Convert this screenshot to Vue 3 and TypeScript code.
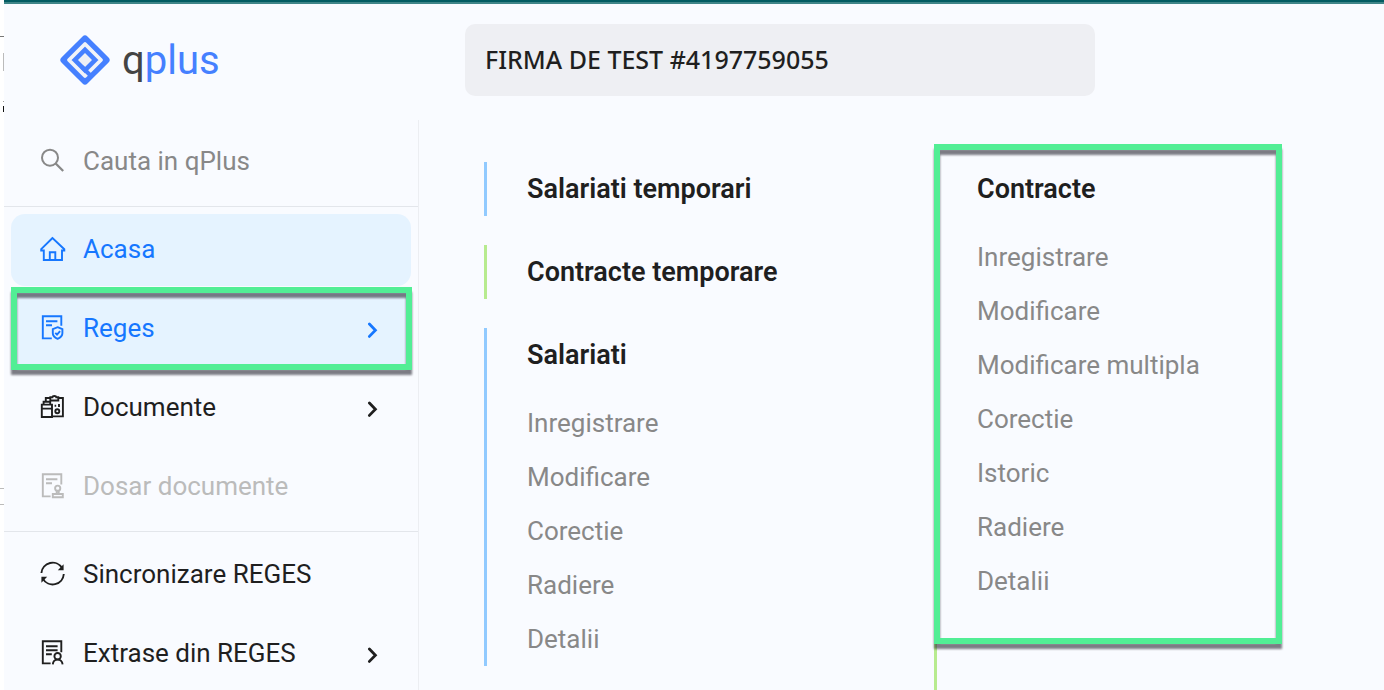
<script setup lang="ts">
import { ref } from 'vue'

type IconName = 'home' | 'reges' | 'documents' | 'folder' | 'sync' | 'extract'

interface NavItem {
  label: string
  icon: IconName
  arrow?: boolean
  active?: boolean
  disabled?: boolean
  callout?: boolean
}

interface MenuGroup {
  title: string
  tone: 'blue' | 'green'
  items: string[]
}

const query = ref('')
const company = 'FIRMA DE TEST #4197759055'

const sections: NavItem[][] = [
  [
    { label: 'Acasa', icon: 'home', active: true },
    { label: 'Reges', icon: 'reges', arrow: true, active: true, callout: true },
    { label: 'Documente', icon: 'documents', arrow: true },
    { label: 'Dosar documente', icon: 'folder', disabled: true },
  ],
  [
    { label: 'Sincronizare REGES', icon: 'sync' },
    { label: 'Extrase din REGES', icon: 'extract', arrow: true },
  ],
]

const groups: MenuGroup[] = [
  { title: 'Salariati temporari', tone: 'blue', items: [] },
  { title: 'Contracte temporare', tone: 'green', items: [] },
  { title: 'Salariati', tone: 'blue', items: ['Inregistrare', 'Modificare', 'Corectie', 'Radiere', 'Detalii'] },
]

const contracts = ['Inregistrare', 'Modificare', 'Modificare multipla', 'Corectie', 'Istoric', 'Radiere', 'Detalii']
</script>

<template>
  <div class="page">
    <svg class="fringe" width="4" height="690" viewBox="0 0 4 690" aria-hidden="true">
      <path d="M0 36.5H4" stroke="#777" />
      <path d="M3.5 53V71" stroke="#bbb" />
      <path d="M3 101.5H4" stroke="#999" />
      <path d="M3.5 106V112" stroke="#111" />
      <path d="M0 488.5H4M0 504.5H4" stroke="#bbb" />
    </svg>
    <div class="shell">
      <header class="top">
        <a class="brand" href="#">
          <svg width="50" height="50" viewBox="0 0 50 50" aria-hidden="true">
            <rect x="6.6" y="6.6" width="36.8" height="36.8" rx="3.5" transform="rotate(45 25 25)" fill="#4580ff" />
            <path d="M25 9L41 25L25 41L9 25Z" fill="none" stroke="#f1f3f8" stroke-width="3.8" stroke-linejoin="round" />
            <path d="M25 18L32 25L25 32L18 25Z" fill="#eef0f5" />
            <path d="M22 32L30.5 40.5" stroke="#4580ff" stroke-width="4" />
          </svg>
          <span class="wordmark"><span class="q">q</span>plus</span>
        </a>
        <button class="company" type="button">{{ company }}</button>
      </header>

      <div class="body">
        <aside class="sidebar">
          <label class="search">
            <svg width="26" height="26" viewBox="0 0 26 26" fill="none" stroke="#888" stroke-width="2" aria-hidden="true">
              <circle cx="10" cy="9.7" r="8" />
              <path d="M15.7 15.5L23.2 23" stroke-width="2.3" />
            </svg>
            <input v-model="query" type="text" placeholder="Cauta in qPlus" aria-label="Cauta in qPlus" />
          </label>

          <nav v-for="(section, index) in sections" :key="index" class="section">
            <button
              v-for="item in section"
              :key="item.label"
              class="nav-item"
              :class="{ active: item.active, callout: item.callout }"
              type="button"
              :disabled="item.disabled"
            >
              <svg class="icon" width="26" height="26" viewBox="0 0 26 26" aria-hidden="true">
                <g v-if="item.icon === 'home'">
                  <path d="M12.5 2L1.2 13.2V14.5H3.8V24H22V14.5H24.3V13.2Z" />
                  <path d="M9.8 24V16.2H15.3V24" />
                </g>
                <g v-else-if="item.icon === 'reges'">
                  <path d="M21.3 10.8V1.3H2.8V23.4H11.8M6 6.2H17.4M6 10.2H12" />
                  <path d="M17.6 12.2L22.4 14.2V18.3C22.4 21 20 22.8 17.6 23.8C15.2 22.8 12.8 21 12.8 18.3V14.2Z" />
                  <path d="M15.3 17.9L17 19.6L20.1 16.1" />
                </g>
                <g v-else-if="item.icon === 'documents'">
                  <path d="M5.8 7V4H10.5M18 4H22.9V22.4H12.3" />
                  <path d="M10.3 3.3H12.4C12.5 1.6 16.2 1.6 16.3 3.3H18.3V6.5H10.3Z" />
                  <path d="M3.6 10.6V7.8H10.2V10.6M1.8 10.6H12V23H1.8ZM1.8 14.6H12" />
                  <path d="M14.6 11.7H16.2M19 10V13" />
                  <circle cx="17.3" cy="17.2" r="2" />
                </g>
                <g v-else-if="item.icon === 'folder'">
                  <path d="M21.3 11.5V1.3H2.8V23.4H10.6M6 6.2H17.4M6 10.2H12" />
                  <circle cx="17.7" cy="15.2" r="2.6" />
                  <path d="M16.7 17.8V21M18.7 17.8V21M12.8 21H22.8V24.2H12.8Z" />
                </g>
                <g v-else-if="item.icon === 'sync'">
                  <path d="M1.4 12A11.2 11.2 0 0 1 22.2 7.2M23.8 13A11.2 11.2 0 0 1 2.9 17.8" />
                  <path class="solid" d="M23.6 3.2V9.2H17.8ZM1.4 21.8V15.8H7.2Z" />
                </g>
                <g v-else>
                  <path d="M21.3 12.3V1.3H2.8V23.4H10.6M6 6.2H17.6M6 10.2H17.6M6 14.2H11.8" />
                  <circle cx="17.6" cy="16.2" r="3.2" />
                  <path d="M12.8 24.4C13 21.5 14.8 19.6 17.6 19.6C20.4 19.6 22.3 21.5 22.6 24.4" />
                </g>
              </svg>
              <span class="label">{{ item.label }}</span>
              <svg v-if="item.arrow" class="arrow" width="12" height="20" viewBox="0 0 12 20" aria-hidden="true">
                <path d="M2.4 6L8.4 12.2L2.4 18.4" />
              </svg>
            </button>
          </nav>
        </aside>

        <main class="menu">
          <div class="column">
            <section v-for="group in groups" :key="group.title" class="group" :class="group.tone">
              <h2>{{ group.title }}</h2>
              <ul v-if="group.items.length">
                <li v-for="entry in group.items" :key="entry"><a href="#">{{ entry }}</a></li>
              </ul>
            </section>
          </div>
          <div class="column">
            <section class="group green tall">
              <div class="marked">
                <h2>Contracte</h2>
                <ul>
                  <li v-for="entry in contracts" :key="entry"><a href="#">{{ entry }}</a></li>
                </ul>
              </div>
            </section>
          </div>
        </main>
      </div>
    </div>
  </div>
</template>

<style>
body {
  background: #fff;
}
</style>

<style scoped>
.page {
  display: flex;
  height: 100vh;
  overflow: hidden;
  font-family: Roboto, "Liberation Sans", sans-serif;
  font-size: 26px;
  line-height: 36px;
  color: #1f1f1f;
}

.fringe {
  flex: none;
}

.shell {
  flex: 1;
  min-width: 0;
  display: flex;
  flex-direction: column;
  background: #f9fbff;
}

.top {
  flex: none;
  display: flex;
  box-sizing: border-box;
  height: 120px;
  border-top: 2px solid #035c62;
  box-shadow: inset 0 2px #3f8588;
  padding-top: 22px;
}

.brand {
  display: flex;
  align-items: center;
  gap: 12px;
  flex: none;
  box-sizing: border-box;
  width: 461px;
  height: 72px;
  padding-left: 56px;
  color: #4580ff;
  text-decoration: none;
}

.wordmark {
  padding-top: 2px;
  font-size: 40px;
  line-height: 48px;
}

.q {
  color: #444;
}

.company {
  flex: 0 1 630px;
  height: 72px;
  padding: 0 20px 2px;
  border: 0;
  border-radius: 10px;
  background: #eeeff3;
  color: #1f1f1f;
  font: 500 25px/36px "Noto Sans", "Open Sans", sans-serif;
  text-align: left;
}

.body {
  flex: 1;
  min-height: 0;
  display: flex;
}

.sidebar {
  flex: none;
  box-sizing: border-box;
  width: 415px;
  border-right: 1px solid #eceef2;
}

.search {
  display: flex;
  align-items: center;
  gap: 17px;
  box-sizing: border-box;
  height: 87px;
  padding: 0 36px 5px;
  border-bottom: 1px solid #e3e6eb;
}

.search input {
  flex: 1;
  min-width: 0;
  padding: 0;
  border: 0;
  outline: 0;
  background: transparent;
  font: inherit;
  color: #1f1f1f;
}

.search input::placeholder {
  color: #888;
  opacity: 1;
}

.section {
  display: flex;
  flex-direction: column;
  gap: 7px;
  padding: 7px 7px 8px;
}

.section + .section {
  border-top: 1px solid #e3e6eb;
}

.nav-item {
  position: relative;
  display: flex;
  align-items: center;
  gap: 17px;
  height: 72px;
  padding: 0 32px 2px 29px;
  border: 0;
  border-radius: 14px;
  background: transparent;
  font: inherit;
  color: #1f1f1f;
  text-align: left;
}

.nav-item.active {
  background: #e5f3ff;
  color: #1677ff;
}

.nav-item:disabled {
  color: #bbb;
}

.nav-item.callout {
  border-radius: 0;
}

.label {
  flex: 1;
}

.icon,
.arrow {
  flex: none;
  fill: none;
  stroke: currentColor;
  stroke-width: 1.9;
}

.icon .solid {
  fill: currentColor;
  stroke: none;
}

.arrow {
  stroke-width: 2.8;
  stroke-linecap: round;
}

.callout::after,
.marked::after {
  content: "";
  position: absolute;
  border: 6px solid #52ee95;
  filter: drop-shadow(0 5px 1px rgba(40, 40, 50, 0.6));
  pointer-events: none;
}

.callout::after {
  inset: -6px -1px -5px 0;
}

.menu {
  flex: 1;
  min-width: 0;
  display: grid;
  grid-template-columns: 1fr 1fr;
  padding: 42px 0 0 65px;
}

.column {
  display: flex;
  flex-direction: column;
  gap: 29px;
}

.group {
  border-left: 3px solid;
}

.group.blue {
  border-color: #91caff;
}

.group.green {
  border-color: #b7eb8f;
}

.group.tall {
  flex: 1;
}

.group h2 {
  margin: 0;
  padding-left: 40px;
  font-size: 27px;
  font-weight: 600;
  line-height: 54px;
}

.group ul {
  margin: 14px 0 0;
  padding: 0 0 0 40px;
  list-style: none;
}

.group li {
  line-height: 54px;
}

.group li a {
  color: #888;
  text-decoration: none;
}

.marked {
  position: relative;
}

.marked::after {
  inset: -18px 102px -36px -3px;
}
</style>
